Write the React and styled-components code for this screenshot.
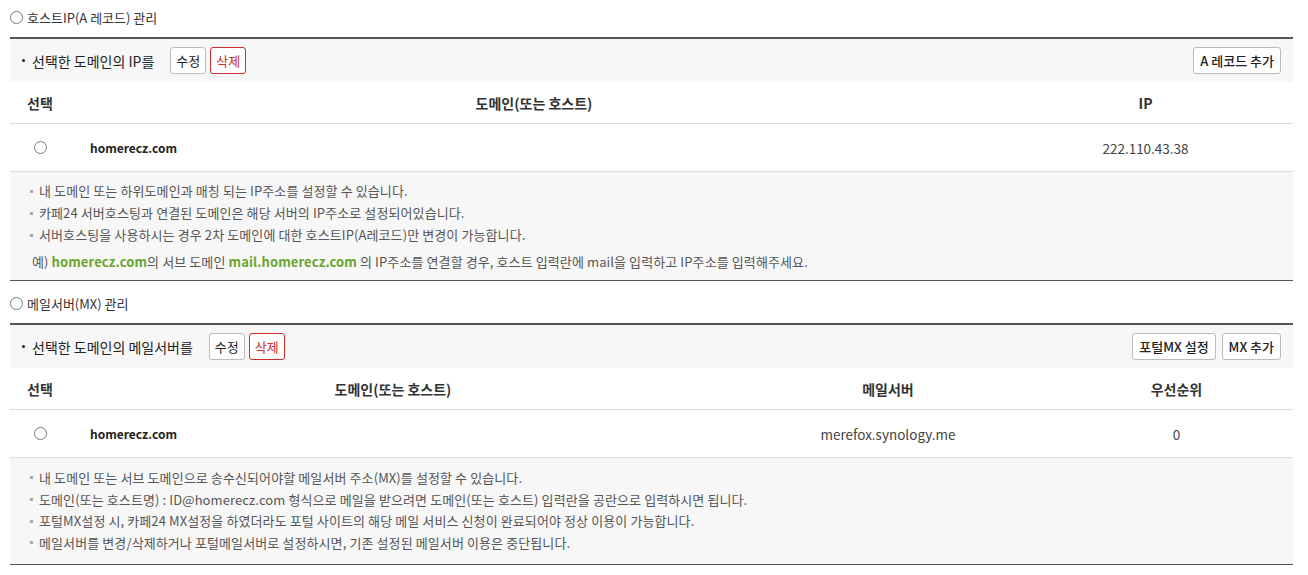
import styled, { createGlobalStyle } from 'styled-components';

const GlobalStyle = createGlobalStyle`
    body {
        margin: 0;
        background: #fff;
        font-family: "Noto Sans CJK KR", "Noto Sans", sans-serif;
        color: #333;
    }
`

const Page = styled.div`
    padding: 0 15px 0 10px;
`

const SectionTitle = styled.div`
    display: flex;
    align-items: center;
    gap: 4px;
    height: 37px;
    padding-bottom: 3px;
    box-sizing: border-box;
    margin-top: ${(props) => props.$top || 0}px;
    font-size: 13px;
    color: #333;
`

const Radio = styled.span`
    display: inline-block;
    width: 11px;
    height: 11px;
    border: 1px solid #777;
    border-radius: 50%;
    background: #fff;
    flex-shrink: 0;
`

const Panel = styled.div`
    border-top: 2px solid #555;
    border-bottom: 1px solid #555;
`

const Toolbar = styled.div`
    display: flex;
    align-items: center;
    justify-content: space-between;
    height: 43px;
    padding: 0 12px 0 12px;
    background: #f7f7f7;
`

const ToolGroup = styled.div`
    display: flex;
    align-items: center;
    gap: ${(props) => props.$gap || 4}px;
`

const Lead = styled.span`
    display: flex;
    align-items: center;
    font-size: 14px;
    color: #222;
    margin-right: ${(props) => props.$gap}px;
    &::before {
        content: "";
        width: 3px;
        height: 3px;
        border-radius: 50%;
        background: #222;
        margin-right: 7px;
    }
`

const Button = styled.button`
    height: 27px;
    padding: 0 ${(props) => (props.$strong ? 6 : 5)}px;
    border: 1px solid ${(props) => (props.$danger ? '#c9302c' : '#bbb')};
    border-radius: 3px;
    background: #fff;
    color: ${(props) => (props.$danger ? '#c9302c' : '#222')};
    font-family: inherit;
    font-size: 13px;
    font-weight: ${(props) => (props.$strong ? 500 : 400)};
    cursor: pointer;
`

const Row = styled.div`
    display: grid;
    grid-template-columns: ${(props) => props.$cols};
    align-items: center;
    box-sizing: border-box;
    height: ${(props) => props.$h}px;
    border-bottom: 1px solid #ddd;
`

const HeadCell = styled.div`
    text-align: center;
    font-size: 14px;
    font-weight: 700;
    color: #333;
`

const Cell = styled.div`
    display: flex;
    justify-content: ${(props) => (props.$left ? 'flex-start' : 'center')};
    padding-left: ${(props) => (props.$left ? 20 : 0)}px;
    font-size: ${(props) => (props.$bold ? 12 : 13.5)}px;
    font-weight: ${(props) => (props.$bold ? 700 : 400)};
    color: ${(props) => (props.$bold ? '#222' : '#444')};
`

const Info = styled.ul`
    margin: 0;
    list-style: none;
    padding: ${(props) => props.$pad};
    background: #f7f7f7;
    font-size: 13px;
    letter-spacing: 0.1px;
    color: #555;
`

const Note = styled.li`
    display: flex;
    align-items: center;
    line-height: ${(props) => props.$lh}px;
    &::before {
        content: "";
        width: 3px;
        height: 3px;
        background: #aaa;
        margin-right: 6px;
    }
`

const Example = styled.li`
    margin-top: 5px;
    padding-left: 2px;
    line-height: 22px;
    b {
        color: #6aa52f;
        font-weight: 700;
    }
`

const ipCols = '60px 928px 1fr';
const mxCols = '60px 646px 344px 1fr';

export default function App() {
    return (
        <Page>
            <GlobalStyle />
            <SectionTitle>
                <Radio />
                호스트IP(A 레코드) 관리
            </SectionTitle>
            <Panel>
                <Toolbar>
                    <ToolGroup>
                        <Lead $gap={12}>선택한 도메인의 IP를</Lead>
                        <Button>수정</Button>
                        <Button $danger>삭제</Button>
                    </ToolGroup>
                    <Button $strong>A 레코드 추가</Button>
                </Toolbar>
                <Row $cols={ipCols} $h={42}>
                    <HeadCell>선택</HeadCell>
                    <HeadCell>도메인(또는 호스트)</HeadCell>
                    <HeadCell>IP</HeadCell>
                </Row>
                <Row $cols={ipCols} $h={48}>
                    <Cell><Radio /></Cell>
                    <Cell $left $bold>homerecz.com</Cell>
                    <Cell>222.110.43.38</Cell>
                </Row>
                <Info $pad="8px 20px 7px 20px">
                    <Note $lh={22}>내 도메인 또는 하위도메인과 매칭 되는 IP주소를 설정할 수 있습니다.</Note>
                    <Note $lh={22}>카페24 서버호스팅과 연결된 도메인은 해당 서버의 IP주소로 설정되어있습니다.</Note>
                    <Note $lh={22}>서버호스팅을 사용하시는 경우 2차 도메인에 대한 호스트IP(A레코드)만 변경이 가능합니다.</Note>
                    <Example>
                        예) <b>homerecz.com</b>의 서브 도메인 <b>mail.homerecz.com</b> 의 IP주소를 연결할 경우, 호스트 입력란에 mail을 입력하고 IP주소를 입력해주세요.
                    </Example>
                </Info>
            </Panel>

            <SectionTitle $top={5}>
                <Radio />
                메일서버(MX) 관리
            </SectionTitle>
            <Panel>
                <Toolbar>
                    <ToolGroup>
                        <Lead $gap={12}>선택한 도메인의 메일서버를</Lead>
                        <Button>수정</Button>
                        <Button $danger>삭제</Button>
                    </ToolGroup>
                    <ToolGroup $gap={6}>
                        <Button $strong>포털MX 설정</Button>
                        <Button $strong>MX 추가</Button>
                    </ToolGroup>
                </Toolbar>
                <Row $cols={mxCols} $h={42}>
                    <HeadCell>선택</HeadCell>
                    <HeadCell>도메인(또는 호스트)</HeadCell>
                    <HeadCell>메일서버</HeadCell>
                    <HeadCell>우선순위</HeadCell>
                </Row>
                <Row $cols={mxCols} $h={48}>
                    <Cell><Radio /></Cell>
                    <Cell $left $bold>homerecz.com</Cell>
                    <Cell>merefox.synology.me</Cell>
                    <Cell>0</Cell>
                </Row>
                <Info $pad="9px 20px 10px 20px">
                    <Note $lh={21.7}>내 도메인 또는 서브 도메인으로 송수신되어야할 메일서버 주소(MX)를 설정할 수 있습니다.</Note>
                    <Note $lh={21.7}>도메인(또는 호스트명) : ID@homerecz.com 형식으로 메일을 받으려면 도메인(또는 호스트) 입력란을 공란으로 입력하시면 됩니다.</Note>
                    <Note $lh={21.7}>포털MX설정 시, 카페24 MX설정을 하였더라도 포털 사이트의 해당 메일 서비스 신청이 완료되어야 정상 이용이 가능합니다.</Note>
                    <Note $lh={21.7}>메일서버를 변경/삭제하거나 포털메일서버로 설정하시면, 기존 설정된 메일서버 이용은 중단됩니다.</Note>
                </Info>
            </Panel>
        </Page>
    );
}
